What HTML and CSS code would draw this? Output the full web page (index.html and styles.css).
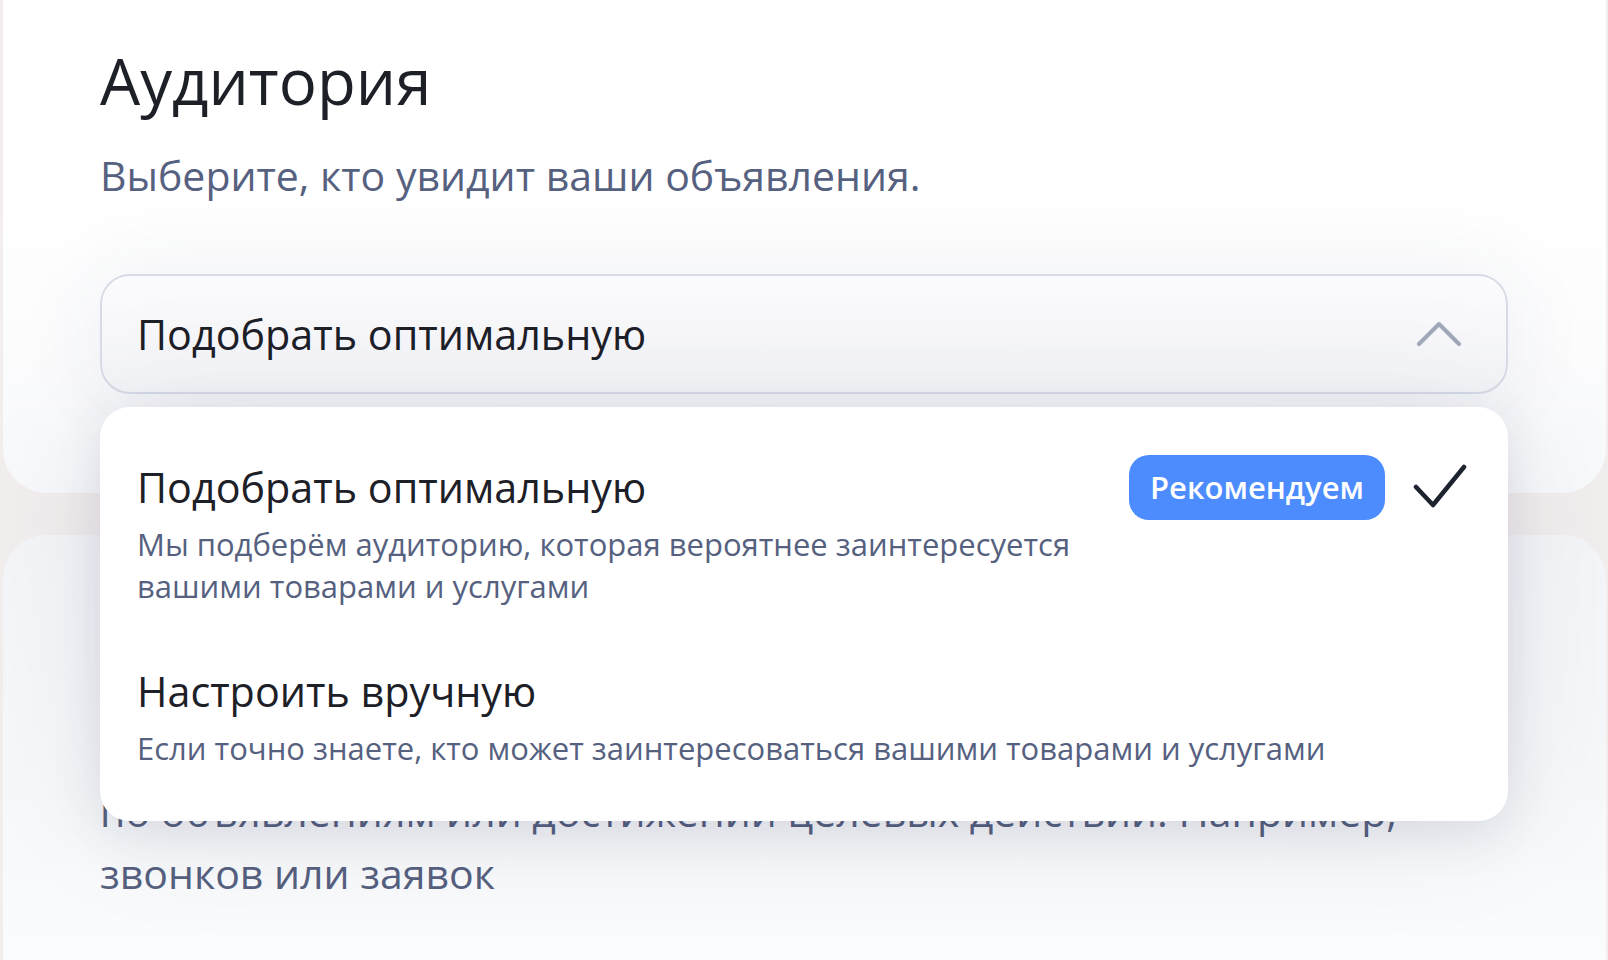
FILE: index.html
```html
<!DOCTYPE html>
<html lang="ru">
<head>
<meta charset="utf-8">
<title>Аудитория</title>
<link rel="stylesheet" href="styles.css">
</head>
<body>
<div class="page">
  <section class="card card-audience">
    <h1 class="title">Аудитория</h1>
    <p class="subtitle">Выберите, кто увидит ваши объявления.</p>
    <div class="select-wrap">
      <div class="select">
        <span class="select-value">Подобрать оптимальную</span>
        <svg class="chevron" width="46" height="26" viewBox="0 0 46 26"><path d="M3 23 L23 3 L43 23" fill="none" stroke="#a1a9bb" stroke-width="4" stroke-linecap="round" stroke-linejoin="round"/></svg>
      </div>
      <div class="menu">
        <div class="option">
          <div class="option-text">
            <div class="option-title">Подобрать оптимальную</div>
            <div class="option-desc">Мы подберём аудиторию, которая вероятнее заинтересуется вашими товарами и услугами</div>
          </div>
          <span class="badge">Рекомендуем</span>
          <svg class="check" width="54" height="46" viewBox="0 0 54 46"><path d="M3 24 L20 42 L51 4" fill="none" stroke="#1e2330" stroke-width="4.5" stroke-linecap="round" stroke-linejoin="round"/></svg>
        </div>
        <div class="option">
          <div class="option-text">
            <div class="option-title">Настроить вручную</div>
            <div class="option-desc">Если точно знаете, кто может заинтересоваться вашими товарами и услугами</div>
          </div>
        </div>
      </div>
    </div>
  </section>
  <section class="card card-next">
    <p class="next-text">по объявлениям или достижении целевых действий. Например,<br>звонков или заявок</p>
  </section>
</div>
</body>
</html>
```

FILE: styles.css
```css
* { box-sizing: border-box; }
html, body { margin: 0; padding: 0; }
body {
  background: #f2eeee;
  font-family: "Open Sans", "Noto Sans", sans-serif;
  width: 1608px;
  height: 960px;
  overflow: hidden;
}
.page {
  padding: 0 2px 0 3px;
}
.card {
  background: #ffffff;
}
.card-audience {
  border-radius: 0 0 44px 44px;
  padding: 43px 98px 99px 97px;
  background: linear-gradient(180deg, #ffffff 0%, #ffffff 40%, #f8f9fb 100%);
  position: relative;
  z-index: 2;
}
.title {
  margin: 0;
  font-size: 63.5px;
  line-height: 76px;
  font-weight: 400;
  color: #1d2027;
}
.subtitle {
  margin: 30px 0 0;
  font-size: 41px;
  line-height: 52px;
  color: #56617f;
}
.select-wrap {
  position: relative;
  margin-top: 73px;
}
.select {
  height: 120px;
  border: 2px solid #d7dce7;
  border-radius: 30px;
  background: linear-gradient(180deg, #fbfbfd 0%, #f4f5f8 100%);
  display: flex;
  align-items: center;
  justify-content: space-between;
  padding: 0 44px 0 35px;
  box-shadow: 0 0 90px rgba(60, 70, 110, 0.07);
}
.select-value {
  font-size: 41.3px;
  color: #1d2027;
}
.chevron { display: block; }
.menu {
  position: absolute;
  left: 0;
  right: 0;
  top: calc(100% + 13px);
  background: #ffffff;
  border-radius: 30px;
  padding: 22px 0 26px;
  box-shadow: 0 12px 50px rgba(40, 50, 90, 0.12), 0 0 140px rgba(40, 50, 90, 0.08);
}
.option {
  display: flex;
  align-items: flex-start;
  padding: 26px 41px 26px 37px;
}
.option-text {
  flex: 1;
  min-width: 0;
  padding-right: 24px;
}
.option-title {
  font-size: 41.3px;
  line-height: 65px;
  color: #1d2027;
}
.option-desc {
  margin-top: 3px;
  font-size: 31px;
  line-height: 42px;
  color: #56617f;
}
.badge {
  flex: none;
  height: 65px;
  line-height: 65px;
  padding: 0 21px;
  border-radius: 20px;
  background: #4c8cff;
  color: #ffffff;
  font-size: 31px;
  font-weight: 600;
}
.check {
  flex: none;
  display: block;
  margin: 8px 0 0 28px;
}
.card-next {
  margin-top: 42px;
  border-radius: 44px 44px 0 0;
  height: 440px;
  padding: 245px 97px 0;
  background: linear-gradient(180deg, #f4f5f8 0%, #f7f8fa 60%, #fbfcfd 100%);
}
.next-text {
  margin: 0;
  font-size: 41px;
  line-height: 62px;
  color: #56617f;
}
```
